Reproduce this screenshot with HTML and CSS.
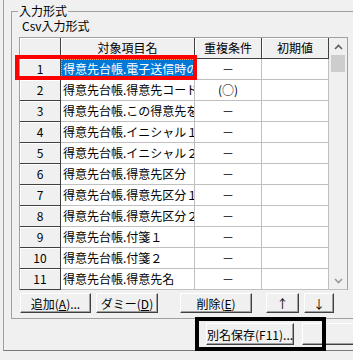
FILE: index.html
```html
<!DOCTYPE html>
<html lang="ja">
<head>
<meta charset="utf-8">
<title>入力形式</title>
<link rel="stylesheet" href="styles.css">
</head>
<body>
<div class="frame">
  <fieldset class="group">
    <legend class="legend">入力形式</legend>
    <div class="sublabel">Csv入力形式</div>
    <div class="gridwrap">
      <div class="grid">
        <div class="fx"></div>
        <div class="fx">対象項目名</div>
        <div class="fx">重複条件</div>
        <div class="fx">初期値</div>

        <div class="fx">1</div>
        <div class="c sel">得意先台帳.電子送信時の区分</div>
        <div class="c ctr">－</div>
        <div class="c"></div>

        <div class="fx">2</div>
        <div class="c">得意先台帳.得意先コード</div>
        <div class="c ctr">(○)</div>
        <div class="c"></div>

        <div class="fx">3</div>
        <div class="c">得意先台帳.この得意先を使用</div>
        <div class="c ctr">－</div>
        <div class="c"></div>

        <div class="fx">4</div>
        <div class="c">得意先台帳.イニシャル１</div>
        <div class="c ctr">－</div>
        <div class="c"></div>

        <div class="fx">5</div>
        <div class="c">得意先台帳.イニシャル２</div>
        <div class="c ctr">－</div>
        <div class="c"></div>

        <div class="fx">6</div>
        <div class="c">得意先台帳.得意先区分</div>
        <div class="c ctr">－</div>
        <div class="c"></div>

        <div class="fx">7</div>
        <div class="c">得意先台帳.得意先区分１</div>
        <div class="c ctr">－</div>
        <div class="c"></div>

        <div class="fx">8</div>
        <div class="c">得意先台帳.得意先区分２</div>
        <div class="c ctr">－</div>
        <div class="c"></div>

        <div class="fx">9</div>
        <div class="c">得意先台帳.付箋１</div>
        <div class="c ctr">－</div>
        <div class="c"></div>

        <div class="fx">10</div>
        <div class="c">得意先台帳.付箋２</div>
        <div class="c ctr">－</div>
        <div class="c"></div>

        <div class="fx">11</div>
        <div class="c">得意先台帳.得意先名</div>
        <div class="c ctr">－</div>
        <div class="c"></div>
      </div>
      <div class="vscroll">
        <div class="arrow">
          <svg width="9" height="6" viewBox="0 0 9 6"><polyline points="1,5 4.5,1.5 8,5" fill="none" stroke="#606060" stroke-width="1.6"/></svg>
        </div>
        <div class="thumb"></div>
        <div class="track"></div>
        <div class="arrow">
          <svg width="9" height="6" viewBox="0 0 9 6"><polyline points="1,1 4.5,4.5 8,1" fill="none" stroke="#9a9a9a" stroke-width="1.6"/></svg>
        </div>
      </div>
    </div>
    <div class="btnrow">
      <button class="btn b-add">追加(<u>A</u>)...</button>
      <button class="btn b-dummy">ダミー(<u>D</u>)</button>
      <button class="btn b-del">削除(<u>E</u>)</button>
      <button class="btn b-up">↑</button>
      <button class="btn b-down">↓</button>
    </div>
  </fieldset>
  <div class="bottomrow">
    <button class="btn b-save">別名保存(F11)...</button>
    <button class="btn b-next"></button>
  </div>
</div>
<div class="mark mark-red"></div>
<div class="mark mark-black"></div>
</body>
</html>
```

FILE: styles.css
```css
* { box-sizing: border-box; }
html, body { margin: 0; padding: 0; }
body {
  width: 353px;
  height: 360px;
  overflow: hidden;
  position: relative;
  background: #f0f0f0;
  color: #000;
  font-family: "Noto Sans CJK JP", "Noto Sans", sans-serif;
  font-size: 12px;
}
.frame {
  margin-left: 3px;
  width: 350px;
  height: 351px;
  overflow: hidden;
  border-left: 1px solid #a0a0a0;
  border-bottom: 1px solid #7a7a7a;
}
.group {
  margin: 4px 0 0 7px;
  padding: 0 0 5px 0;
  width: 400px;
  min-width: 0;
  border: 1px solid #a0a0a0;
}
.legend {
  margin-left: 6px;
  padding: 0 1px;
  line-height: 14px;
  height: 14px;
}
.sublabel {
  margin-left: 10px;
  height: 16px;
  line-height: 16px;
}
.gridwrap {
  display: flex;
  width: 329px;
  margin: 3px 0 0 7px;
  border-top: 1px solid #a0a0a0;
  border-left: 1px solid #a0a0a0;
  border-right: 1px solid #a0a0a0;
}
.grid {
  display: grid;
  grid-template-columns: 41px 134px 67px 67px;
  grid-auto-rows: 21px;
}
.fx {
  background: #f0f0f0;
  border-right: 1px solid #404040;
  border-bottom: 1px solid #404040;
  box-shadow: inset 1px 1px #ffffff;
  text-align: center;
  line-height: 20px;
  white-space: nowrap;
  overflow: hidden;
}
.c {
  background: #ffffff;
  border-right: 1px solid #c0c0c0;
  border-bottom: 1px solid #c0c0c0;
  line-height: 20px;
  padding-left: 2px;
  white-space: nowrap;
  overflow: hidden;
}
.ctr { text-align: center; padding-left: 0; }
.sel {
  background: #0078d7;
  color: #ffffff;
  outline: 1px dotted #f4a460;
  outline-offset: -1px;
}
.vscroll {
  width: 18px;
  display: flex;
  flex-direction: column;
  background: #f0f0f0;
  border-bottom: 1px solid #c0c0c0;
}
.arrow {
  height: 17px;
  display: flex;
  align-items: center;
  justify-content: center;
}
.thumb {
  height: 17px;
  margin: 0 2px;
  background: #cdcdcd;
}
.track { flex: 1; }
.btnrow {
  display: flex;
  height: 20px;
  margin: 3px 0 0 8px;
}
.btn {
  height: 20px;
  padding: 0;
  margin: 0;
  border: 1px solid;
  border-color: #ffffff #404040 #404040 #ffffff;
  box-shadow: inset -1px -1px #a0a0a0;
  background: #f0f0f0;
  color: #000;
  font-family: inherit;
  font-size: 12px;
  line-height: 17px;
  text-align: center;
  white-space: nowrap;
}
.b-add { width: 71px; }
.b-dummy { width: 62px; margin-left: 5px; }
.b-del { width: 72px; margin-left: 22px; }
.b-up { width: 33px; margin-left: 14px; }
.b-down { width: 30px; margin-left: 5px; }
.bottomrow {
  display: flex;
  margin-top: 4px;
  padding-left: 202px;
}
.b-save { width: 113px; height: 22px; line-height: 19px; }
.b-next { width: 60px; height: 22px; margin-left: 8px; flex-shrink: 0; }
.mark {
  position: absolute;
  border-style: solid;
  pointer-events: none;
}
.mark-red {
  left: 15px;
  top: 55px;
  width: 182px;
  height: 25px;
  border-width: 4px;
  border-color: #ff0000;
}
.mark-black {
  left: 195px;
  top: 317px;
  width: 131px;
  height: 34px;
  border-width: 4px;
  border-color: #000000;
}
```
